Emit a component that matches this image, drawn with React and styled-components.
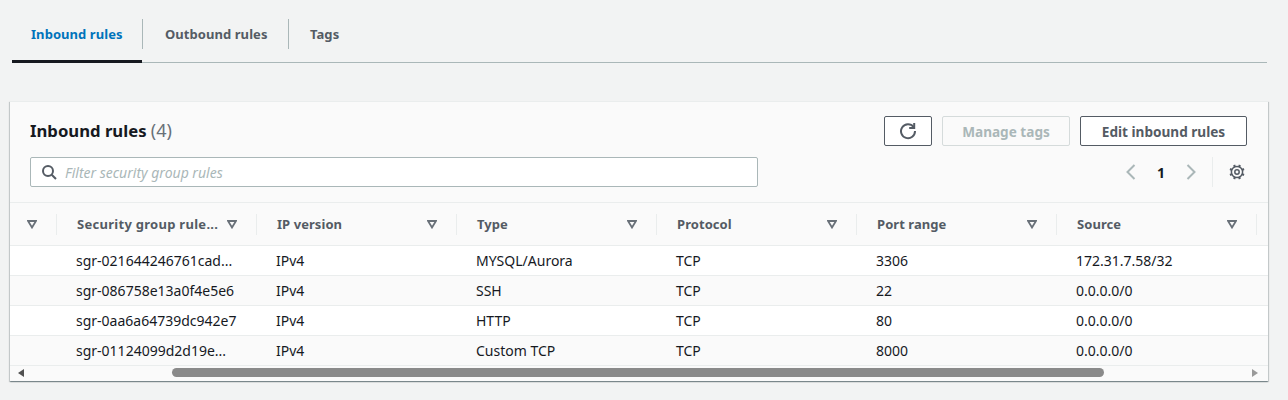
import React from "react";
import styled, { createGlobalStyle } from "styled-components";

const GlobalStyle = createGlobalStyle`
  html, body {
    margin: 0;
    padding: 0;
    background: #f2f3f3;
  }
  * {
    box-sizing: border-box;
  }
  body {
    font-family: "Noto Sans", "Open Sans", sans-serif;
    font-size: 14px;
    color: #16191f;
  }
`;

const Page = styled.div`
  width: 1288px;
  height: 400px;
  overflow: hidden;
  padding: 0 20px 0 10px;
`;

const Tabs = styled.div`
  display: flex;
  height: 63px;
  margin: 0 1px 0 2px;
  padding-top: 19px;
  border-bottom: 1px solid #aab7b8;
`;

const Tab = styled.div`
  width: ${({ $w }) => $w}px;
  height: 44px;
  border-bottom: ${({ $active }) => ($active ? "3px solid #16191f" : "none")};
  margin-bottom: -1px;
  font-size: 13px;
  font-weight: 700;
  letter-spacing: 0.06px;
  line-height: 30px;
  color: ${({ $active }) => ($active ? "#0073bb" : "#545b64")};
`;

const TabLabel = styled.div`
  height: 30px;
  margin-right: -1px;
  border-right: ${({ $sep }) => ($sep ? "1px solid #aab7b8" : "none")};
  padding-left: ${({ $offset }) => $offset}px;
`;

const Card = styled.section`
  width: 1258px;
  height: 280px;
  margin-top: 38px;
  background: #fafafa;
  border-top: 1px solid #eaeded;
  box-shadow: 0 1px 1px 0 rgba(0, 28, 36, 0.3), 1px 1px 1px 0 rgba(0, 28, 36, 0.15), -1px 1px 1px 0 rgba(0, 28, 36, 0.15);
  overflow: hidden;
`;

const CardHeader = styled.header`
  height: 101px;
  padding: 14px 21px 0 20px;
  border-bottom: 1px solid #eaeded;
`;

const TopRow = styled.div`
  display: flex;
  align-items: center;
  justify-content: space-between;
  height: 30px;
`;

const Title = styled.h2`
  margin: 0 0 2px;
  font-size: 16.7px;
  font-weight: 700;
  line-height: 30px;
  color: #16191f;
`;

const Count = styled.span`
  font-size: 18px;
  font-weight: 400;
  color: #687078;
`;

const Actions = styled.div`
  display: flex;
  gap: 10px;
`;

const Button = styled.button`
  display: flex;
  align-items: center;
  justify-content: center;
  width: ${({ $w }) => $w}px;
  height: 30px;
  padding: 0;
  background: ${({ disabled }) => (disabled ? "#fafafa" : "#fff")};
  border: 1px solid ${({ disabled }) => (disabled ? "#d5dbdb" : "#545b64")};
  border-radius: 2px;
  font-family: inherit;
  font-size: 13.6px;
  font-weight: 700;
  color: ${({ disabled }) => (disabled ? "#aab7b8" : "#545b64")};
`;

const BottomRow = styled.div`
  display: flex;
  align-items: center;
  justify-content: space-between;
  height: 30px;
  margin-top: 11px;
`;

const Filter = styled.div`
  display: flex;
  align-items: center;
  gap: 8px;
  width: 728px;
  height: 30px;
  padding-left: 10px;
  background: #fff;
  border: 1px solid #aab7b8;
  border-radius: 2px;
`;

const Placeholder = styled.span`
  font-size: 14px;
  font-style: italic;
  color: #aab7b8;
`;

const Pager = styled.div`
  display: flex;
  align-items: center;
  height: 30px;
  padding-right: 2px;
`;

const PageNumber = styled.span`
  width: 48px;
  text-align: center;
  font-size: 14px;
  font-weight: 700;
`;

const PagerDivider = styled.span`
  width: 1px;
  height: 30px;
  margin: 0 16px 0 15px;
  background: #eaeded;
`;

const TableGrid = styled.div`
  display: grid;
  grid-template-columns: 47px repeat(6, 200px) 11px;
`;

const HeadCell = styled.div`
  display: flex;
  align-items: center;
  justify-content: space-between;
  height: 43px;
  padding: 0 20px 0 ${({ $first }) => ($first ? 17 : 20)}px;
  background: #fafafa;
  border-bottom: 1px solid #eaeded;
  font-size: 13px;
  font-weight: 700;
  letter-spacing: ${({ $wide }) => ($wide ? 0.28 : 0.06)}px;
  color: #545b64;
  position: relative;
  &::after {
    content: "";
    position: absolute;
    right: 0;
    top: 11px;
    height: 21px;
    width: 1px;
    background: #eaeded;
  }
`;

const Cell = styled.div`
  height: 30px;
  padding-left: 19px;
  background: ${({ $odd }) => ($odd ? "#fafafa" : "#fff")};
  border-bottom: 1px solid #eaeded;
  font-size: 14px;
  line-height: 30px;
  white-space: nowrap;
  color: #16191f;
`;

const Scrollbar = styled.div`
  display: flex;
  align-items: center;
  height: 15px;
  padding: 0 10px 2px 8px;
`;

const ScrollThumb = styled.div`
  width: 932px;
  height: 9px;
  margin: 0 auto 0 148px;
  border-radius: 5px;
  background: #8a8a8a;
`;

const Caret = () => (
  <svg width="10" height="9" viewBox="0 0 10 9">
    <path d="M1 1h8L5 7.5z" fill="none" stroke="#687078" strokeWidth="1.8" strokeLinejoin="miter" />
  </svg>
);

const SearchIcon = () => (
  <svg width="16" height="16" viewBox="0 0 16 16">
    <circle cx="7" cy="7" r="5" fill="none" stroke="#545b64" strokeWidth="2" />
    <path d="M10.7 10.7L15 15" stroke="#545b64" strokeWidth="2" />
  </svg>
);

const RefreshIcon = () => (
  <svg width="18" height="18" viewBox="0 0 18 18">
    <path d="M14.6 5A7 7 0 1 0 16 9" fill="none" stroke="#545b64" strokeWidth="2" />
    <path d="M15.2 1v5h-5" fill="none" stroke="#545b64" strokeWidth="2" />
  </svg>
);

const Chevron = ({ right }) => (
  <svg width="12" height="18" viewBox="0 0 12 18">
    <path d={right ? "M2.5 2L9.5 9l-7 7" : "M9.5 2L2.5 9l7 7"} fill="none" stroke="#aab7b8" strokeWidth="2" />
  </svg>
);

const GearIcon = () => (
  <svg width="16" height="16" viewBox="0 0 16 16">
    <circle cx="8" cy="8" r="5.6" fill="none" stroke="#545b64" strokeWidth="1.5" />
    <circle cx="8" cy="8" r="2.2" fill="none" stroke="#545b64" strokeWidth="1.5" />
    {[0, 45, 90, 135, 180, 225, 270, 315].map((a) => (
      <rect key={a} x="6.9" y="0.4" width="2.2" height="2.4" fill="#545b64" transform={`rotate(${a + 22.5} 8 8)`} />
    ))}
  </svg>
);

const ScrollArrow = ({ right }) => (
  <svg width="6" height="8" viewBox="0 0 6 8">
    <path d={right ? "M0 0l6 4-6 4z" : "M6 0L0 4l6 4z"} fill={right ? "#9a9a9a" : "#505050"} />
  </svg>
);

const columns = ["Security group rule...", "IP version", "Type", "Protocol", "Port range", "Source"];

const rows = [
  ["sgr-021644246761cad...", "IPv4", "MYSQL/Aurora", "TCP", "3306", "172.31.7.58/32"],
  ["sgr-086758e13a0f4e5e6", "IPv4", "SSH", "TCP", "22", "0.0.0.0/0"],
  ["sgr-0aa6a64739dc942e7", "IPv4", "HTTP", "TCP", "80", "0.0.0.0/0"],
  ["sgr-01124099d2d19e...", "IPv4", "Custom TCP", "TCP", "8000", "0.0.0.0/0"],
];

const App = () => {
  return (
    <Page>
      <GlobalStyle />
      <Tabs>
        <Tab $w={130} $active>
          <TabLabel $offset={19} $sep>Inbound rules</TabLabel>
        </Tab>
        <Tab $w={146}>
          <TabLabel $offset={23} $sep>Outbound rules</TabLabel>
        </Tab>
        <Tab $w={100}>
          <TabLabel $offset={22}>Tags</TabLabel>
        </Tab>
      </Tabs>

      <Card>
        <CardHeader>
          <TopRow>
            <Title>
              Inbound rules <Count>(4)</Count>
            </Title>
            <Actions>
              <Button $w={48} aria-label="Refresh">
                <RefreshIcon />
              </Button>
              <Button $w={128} disabled>
                Manage tags
              </Button>
              <Button $w={167}>Edit inbound rules</Button>
            </Actions>
          </TopRow>
          <BottomRow>
            <Filter>
              <SearchIcon />
              <Placeholder>Filter security group rules</Placeholder>
            </Filter>
            <Pager>
              <Chevron />
              <PageNumber>1</PageNumber>
              <Chevron right />
              <PagerDivider />
              <GearIcon />
            </Pager>
          </BottomRow>
        </CardHeader>

        <TableGrid>
          <HeadCell $first>
            <Caret />
          </HeadCell>
          {columns.map((c, i) => (
            <HeadCell key={c} $wide={i === 0}>
              {c}
              <Caret />
            </HeadCell>
          ))}
          <HeadCell />
          {rows.map((row, i) => (
            <React.Fragment key={row[0]}>
              <Cell $odd={i % 2 === 1} />
              {row.map((v, j) => (
                <Cell key={j} $odd={i % 2 === 1}>
                  {v}
                </Cell>
              ))}
              <Cell $odd={i % 2 === 1} />
            </React.Fragment>
          ))}
        </TableGrid>
        <Scrollbar>
          <ScrollArrow />
          <ScrollThumb />
          <ScrollArrow right />
        </Scrollbar>
      </Card>
    </Page>
  );
};

export default App;
